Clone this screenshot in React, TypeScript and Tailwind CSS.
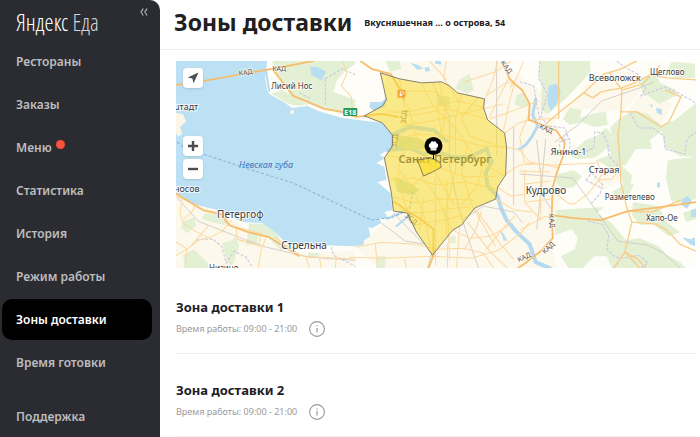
import { useState } from 'react';
import { clsx } from 'clsx';

interface MenuItem {
  id: string;
  label: string;
  hasBadge?: boolean;
}

interface Zone {
  id: number;
  name: string;
  hours: string;
}

const menuItems: MenuItem[] = [
  { id: 'restaurants', label: 'Рестораны' },
  { id: 'orders', label: 'Заказы' },
  { id: 'menu', label: 'Меню', hasBadge: true },
  { id: 'stats', label: 'Статистика' },
  { id: 'history', label: 'История' },
  { id: 'schedule', label: 'Режим работы' },
  { id: 'zones', label: 'Зоны доставки' },
  { id: 'cooking', label: 'Время готовки' },
];

const zones: Zone[] = [
  { id: 1, name: 'Зона доставки 1', hours: '09:00 - 21:00' },
  { id: 2, name: 'Зона доставки 2', hours: '09:00 - 21:00' },
];

const forests = [
  'M273 61L356 61L356 64L345 72L338 80L334 92L356 100L356 117L336 112L310 104L294 96L283 84L276 72Z',
  'M283 90L292 95L308 104L300 106L289 104L281 99L272 94Z',
  'M176 165L190 170L192 182L181 178L176 175Z',
  'M184 221L196 217L197 226L188 233L182 228Z',
  'M206 213L219 214L230 220L226 225L212 222L203 219Z',
  'M184 254L195 249L208 262L210 268L186 268Z',
  'M231 241L237 236L240 246L236 258L232 268L227 258L223 243Z',
  'M250 223L263 224L258 242L247 246Z',
  'M263 223L275 230L283 242L292 247L282 250L268 237L256 234Z',
  'M309 252L321 253L319 257L308 257Z',
  'M460 80L470 74L474 90L468 94L456 89Z',
  'M517 95L523 93L530 105L522 108L515 104Z',
  'M540 61L590 61L591 72L580 84L569 96L560 104L548 114L541 110L542 86L539 74Z',
  'M386 61L400 61L402 69L391 72Z',
  'M570 108L582 110L580 118L596 113L606 112L608 125L594 127L582 122L570 125L563 119Z',
  'M620 118L632 111L648 114L662 126L675 120L696 103L696 157L680 156L665 147L662 131L650 140L652 149L636 149L626 165L610 168L597 160L612 154L604 147L614 138L610 128Z',
  'M606 128L614 136L603 152L594 158L579 159L571 157L577 148L586 140L597 136Z',
  'M672 62L695 64L695 78L676 78L666 72Z',
  'M639 82L655 73L660 83L676 90L676 96L659 104L650 97L643 93Z',
  'M696 157L668 160L666 178L671 200L680 203L696 199L696 157Z',
  'M612 192L624 185L634 184L629 196L618 198Z',
  'M620 164L632 175L631 185L624 187L622 178L616 169Z',
  'M559 174L574 170L582 176L574 187L562 189L556 182Z',
  'M556 210L604 207L597 213L612 223L626 240L640 238L659 246L666 254L680 262L686 268L612 268L607 256L594 256L583 268L569 268L561 256L575 249L578 238L572 229L555 235Z',
  'M633 202L658 206L668 223L680 232L669 236L653 224L640 225L632 215Z',
  'M683 213L696 208L696 219L686 222Z',
  'M450 236L456 236L456 243L450 243Z',
  'M378 256L386 256L386 268L377 268Z',
];

const urban = [
  'M388 64L430 61L500 61L540 90L548 110L560 130L560 200L552 220L556 268L380 268L358 250L394 212L384 160L393 135L366 116L384 106Z',
  'M592 76L608 72L630 72L652 82L640 92L625 110L600 112L583 108L574 118L562 113L576 100Z',
  'M627 112L643 92L673 103L661 126L648 116Z',
  'M176 195L219 212L262 236L292 254L356 250L356 268L176 268Z',
  'M596 174L612 168L622 179L604 190L590 185Z',
];

const lakes = [
  'M311 67L318 67L327 72L322 81L312 75Z',
  'M411 63L418 65L424 69L418 70ZM435 61L441 61L442 65L436 64Z',
  'M425 68L429 67L431 71L426 72Z',
  'M371 102L382 102L388 97L386 106L374 111L370 107Z',
  'M549 86L557 84L561 92L557 104L551 111L548 103Z',
  'M656 108L662 109L662 115L657 113ZM650 104L653 105L652 108Z',
  'M682 199L688 196L692 201L687 209L682 205ZM691 210L696 209L696 217L691 217Z',
  'M682 237L691 239L695 237L695 246L690 244Z',
  'M657 183L660 182L660 188L657 187Z',
  'M500 229L505 235L508 241L504 240Z',
];

const bay =
  'M170 61L268 61L266 78L268 91L271 95L283 101L293 108L308 106L319 111L343 118L367 121L383 123L393 135L392 148L380 155L386 158L377 163L385 167L387 180L378 182L391 193L393 210L385 212L390 220L380 218L382 223L373 228L369 227L371 236L365 240L364 245L353 246L326 245L304 246L286 242L276 232L263 223L243 222L219 210L193 204L184 197L170 192Z';

const zoneOutline =
  'M381 73L400 79L422 83L442 82L450 86L458 93L485 99L484 108L488 120L505 133L507 148L506 175L498 187L496 199L475 208L462 225L453 230L433 255L417 232L408 213L394 211L392 193L385 158L393 146L393 135L383 123L365 116L383 106L387 100L384 86Z';

const innerZoneOutline = 'M418 160L432 158L440 162L442 167L433 172L424 176Z';

const minorRoads = [
  // north coast and suburbs
  'M343 61L348 73L342 86L352 97L353 111',
  'M176 196L183 199L181 213L184 223L198 232L210 238L223 231L233 220',
  'M198 203L192 213L184 219',
  'M176 241L188 249L200 240L210 237M188 249L186 268M188 249L176 256M191 247L209 226',
  'M237 227L262 233L260 245L238 239Z',
  'M267 237L262 250L259 268M262 246L240 240M276 237L287 246L303 256L356 259',
  'M307 257L310 268M320 257L322 268M337 256L336 268',
  // city grid
  'M392 75L410 110L418 142L434 170L455 205M400 79L405 108L408 130',
  'M404 92L420 91L437 92L439 115L443 140',
  'M388 112L407 112L440 105L460 101L484 108',
  'M393 118L420 114L448 109L487 119M403 126L436 120L466 113L504 104',
  'M422 84L433 105L458 131L478 160L505 176',
  'M462 95L456 118L456 170L446 210L447 234',
  'M478 98L462 118L470 136L505 148M440 82L446 112L440 148',
  'M394 140L418 134L447 136L482 146L506 147',
  'M388 156L413 158L432 165L465 177L498 176',
  'M391 180L414 178L436 185L466 182L497 189',
  'M393 197L418 203L439 199L475 200',
  'M408 213L430 212L447 209L470 207M415 225L445 220L463 215',
  'M400 170L414 190L424 213L432 252M450 150L428 173L407 190',
  'M423 178L438 198L452 229M410 145L400 160L399 183L408 210',
  'M468 145L462 172L473 207L496 246',
  'M436 177L436 265M447 179L450 260M424 199L420 230M485 160L478 185L462 205',
  // south
  'M356 247L382 242L416 244L438 249L463 248L484 253L494 268',
  'M350 257L385 258L432 256L472 258L499 250L522 232L530 222',
  'M453 230L470 238L491 236L510 225M468 222L480 238L491 252L508 268',
  'M475 208L489 227L500 243L514 259M498 187L511 196L530 194M496 199L515 210L532 212',
  'M405 259L407 268M376 243L378 268M448 243L448 268M460 226L457 268',
  'M482 211L476 230L465 249M515 216L502 230L486 250',
  // east
  'M505 133L519 123L530 120L560 118M506 147L520 150L530 162L560 168M506 174L520 165L535 164',
  'M430 61L447 80M447 61L444 78L460 103M465 82L496 72L512 61M486 96L508 82L523 89',
  'M498 61L494 78L486 98M509 79L502 92L490 117M524 61L517 78L510 89',
  'M490 119L516 110L539 101M515 83L510 101L504 130M530 112L520 137L525 163',
  'M525 170L525 202L541 220M541 168L541 220M520 230L544 217L553 216M527 202L552 199',
  'M526 163L554 165L596 163M525 184L551 181M520 171L550 172',
  'M555 192L568 203L574 204L588 194L599 180M597 160L602 174L599 180L612 179L618 172L617 160',
];

const mainRoads = [
  'M546 124L561 111L584 93L604 74L619 70L637 61',
  'M584 93L593 98L601 92L622 88L635 83L650 75L667 78L696 80',
  'M609 72L622 90L621 114L618 136L620 160L621 182L627 208L632 222L625 252L640 268',
  'M620 112L637 112L661 127L669 122L681 97L665 90M623 90L643 84L660 66',
  'M632 222L656 224L667 230L680 244L696 251M628 211L652 212L681 200',
  'M625 252L614 268M625 252L638 259L646 268M559 118L559 61',
];

const highways = [
  'M170 86L205 81L273 69L315 61',
  'M273 69L294 96L325 109L343 112L356 117L366 116',
  'M361 61L372 69L391 74L400 88L405 101',
  'M366 116L382 114L399 117',
  'M502 61L510 79L523 91L530 104L529 120L543 125L557 131L565 143L563 157L558 170L553 187L552 215L553 238L541 251L524 264L518 268',
  'M552 215L574 218L601 220L628 211L653 208L696 202',
  'M176 193L192 203L204 210L222 214L230 225L249 232L270 237L286 247L300 256',
  'M394 201L408 211L421 219L434 229L434 255L429 268',
];

const rails = [
  'M176 195L199 221L242 238L267 247L310 257L356 260',
  'M433 83L450 117L450 165L459 208L472 248L479 268',
  'M434 246L428 268M462 220L484 206L514 212L523 223',
  'M497 155L497 61M514 127L514 205M394 213L424 244M382 223L406 241L426 244',
  'M555 142L577 126L602 101L640 88L654 82',
  'M520 174L573 178L594 207L618 241L648 245L664 253L680 268',
  'M537 140L542 185L537 229M546 139L541 193L553 211',
];

const borders = [
  'M540 61L539 79L548 94L541 116L548 126L565 128L569 139L562 140L567 134',
  'M520 82L534 86L537 104L540 119',
  'M617 61L624 67L639 75L640 83L646 88L641 96L652 92L665 87L680 94L696 103',
  'M630 113L639 128L653 128L664 136L665 149L685 154L687 139L696 132',
  'M618 166L609 156L608 144L603 133L595 132L594 148L578 155L570 151L570 139L560 142L560 157',
  'M586 180L592 173L603 185L600 194L591 204M586 180L602 188',
  'M588 221L602 224L609 235L607 249L615 257L624 258L639 255L648 263L640 268',
  'M197 240L202 239L214 239L223 247L227 263L235 251L247 257L253 267',
  'M326 79L343 69L356 75M326 79L326 106M300 93L310 98L308 105',
  'M332 247L334 255L356 266',
];

const mapButton = 'flex size-5 items-center justify-center rounded-sm bg-white text-[#4d4d4d] shadow';

function PlaceLabel({ x, y, size, children }: { x: number; y: number; size: number; children: string }) {
  return (
    <text
      x={x}
      y={y}
      fontSize={size}
      fill="#3b3b3b"
      stroke="#fff"
      strokeOpacity="0.8"
      strokeWidth="2"
      strokeLinejoin="round"
      paintOrder="stroke">
      {children}
    </text>
  );
}

function RoadLabel({ x, y, angle }: { x: number; y: number; angle: number }) {
  return (
    <text
      transform={`translate(${x} ${y}) rotate(${angle})`}
      fontSize="7"
      fill="#5a5148"
      stroke="#fff"
      strokeOpacity="0.7"
      strokeWidth="1.5"
      paintOrder="stroke">
      КАД
    </text>
  );
}

function CityMap() {
  return (
    <svg
      viewBox="177 61 519 207"
      preserveAspectRatio="xMidYMid slice"
      className="block h-[207px] w-full"
      role="img"
      aria-label="Санкт-Петербург">
      <rect x="170" y="55" width="540" height="220" fill="#fefdf7" />
      <g fill="#fdf8ec">
        {urban.map((d) => <path key={d} d={d} />)}
      </g>
      <g fill="#e3f0d4">
        {forests.map((d) => <path key={d} d={d} />)}
      </g>
      <path d={bay} fill="#bce0f4" />
      <path d="M170 112L184 114L187 122L181 127L183 134L179 137L176 131L170 128Z" fill="#fcf6e8" />
      <circle cx="293" cy="112" r="2" fill="#fcf6e8" />
      <g fill="#b9def2">
        {lakes.map((d) => <path key={d} d={d} />)}
      </g>

      {/* Neva and its branches */}
      <g fill="none" stroke="#b5daf0" strokeLinecap="round" strokeLinejoin="round">
        <path d="M393 135L411 127L434 130L447 141M388 150L410 148L424 154L437 151L452 157L470 157L487 149L492 162L486 173L488 186L498 196L501 207L507 220L517 232L530 244L536 262L550 268" strokeWidth="4" />
        <path d="M536 99L533 115L538 126L532 137L526 145L520 149" strokeWidth="3" />
        <path d="M397 226L413 213M389 218L404 211M267 72L270 91" strokeWidth="2" />
      </g>
      <path d="M395 177L411 183L420 190L413 195L398 192Z" fill="#cfe3bd" />
      <path d="M396 135L418 138L436 147L417 150L397 147Z" fill="#cfe3bd" />
      <path d="M438 95L450 97L450 108L438 106Z" fill="#dbe9c8" />

      <path
        d="M170 136L186 148L240 166L294 183L345 207L372 220L394 217L410 209L414 190"
        fill="none"
        stroke="#8bb1dc"
        strokeDasharray="3 2"
      />
      <g fill="none" stroke="#c9c6c2" strokeWidth="0.8">
        {rails.map((d) => <path key={d} d={d} />)}
      </g>
      <g fill="none" stroke="#c9c3e6" strokeDasharray="3 1.5">
        {borders.map((d) => <path key={d} d={d} />)}
      </g>
      <g fill="none" stroke="#fbd9a2" strokeWidth="1" strokeLinejoin="round">
        {minorRoads.map((d) => <path key={d} d={d} />)}
      </g>
      <g fill="none" stroke="#f9cc85" strokeWidth="1.3" strokeLinejoin="round">
        {mainRoads.map((d) => <path key={d} d={d} />)}
      </g>
      <g fill="none" stroke="#f7bd6c" strokeWidth="1.8" strokeLinejoin="round">
        {highways.map((d) => <path key={d} d={d} />)}
      </g>

      <g fontFamily="'Noto Sans', sans-serif">
        <RoadLabel x={240} y={76} angle={-9} />
        <RoadLabel x={273} y={71} angle={0} />
        <RoadLabel x={501} y={63} angle={54} />
        <RoadLabel x={539} y={128} angle={24} />
        <RoadLabel x={549} y={214} angle={84} />
        <RoadLabel x={545} y={254} angle={-42} />
        <RoadLabel x={519} y={262} angle={-24} />
        <g fontSize="7" fill="#6b6250">
          <text transform="translate(406 124) rotate(-84)">ЗСД</text>
          <text transform="translate(397 148) rotate(-84)">ЗСД</text>
          <text transform="translate(405 216) rotate(42)">ЗСД</text>
        </g>
        <PlaceLabel x={272} y={89} size={8}>Лисий Нос</PlaceLabel>
        <PlaceLabel x={167} y={110} size={9}>нштадт</PlaceLabel>
        <PlaceLabel x={175} y={192} size={9}>носов</PlaceLabel>
        <PlaceLabel x={218} y={218} size={10}>Петергоф</PlaceLabel>
        <PlaceLabel x={282} y={249} size={10}>Стрельна</PlaceLabel>
        <PlaceLabel x={210} y={271} size={8}>Низино</PlaceLabel>
        <PlaceLabel x={589} y={81} size={9}>Всеволожск</PlaceLabel>
        <PlaceLabel x={650} y={75} size={8}>Щеглово</PlaceLabel>
        <PlaceLabel x={551} y={155} size={9}>Янино-1</PlaceLabel>
        <PlaceLabel x={589} y={173} size={9}>Старая</PlaceLabel>
        <PlaceLabel x={526} y={194} size={10}>Кудрово</PlaceLabel>
        <PlaceLabel x={605} y={200} size={8}>Разметелево</PlaceLabel>
        <PlaceLabel x={646} y={221} size={8}>Хапо-Ое</PlaceLabel>
        <text x="240" y="168" fontSize="9" fontStyle="italic" fill="#4478bd">Невская губа</text>
        <text x="399" y="163" fontSize="11" fontWeight="600" fill="#3b3b3b">Санкт-Петербург</text>
        <rect x="344" y="108" width="14" height="8" rx="1" fill="#269a59" />
        <text x="351" y="115" fontSize="7" fontWeight="700" fill="#fff" textAnchor="middle">E18</text>
      </g>

      <path d={zoneOutline} fill="#f8dc33" fillOpacity="0.54" stroke="#6b675a" strokeWidth="0.8" />
      <path d={innerZoneOutline} fill="#fbdc16" fillOpacity="0.55" stroke="#6b675a" strokeWidth="0.8" />
      <rect x="398" y="90" width="8" height="8" rx="1" fill="#f6a33c" />
      <path d="M401 96.500V91.800H403A1.200 1.200 0 0 1 403 94.300H400M400 95.500H403" fill="none" stroke="#fff" strokeWidth="0.7" />

      {/* restaurant pin */}
      <circle cx="434" cy="146" r="9" fill="#000" />
      <path d="M431 148C428.800 147.400 428.800 143.600 431 143.300C431.400 141.200 433.200 140.800 434 141.800C434.800 140.800 436.600 141.200 437 143.300C439.200 143.600 439.200 147.400 437 148V150.500H431Z" fill="#fff" />
      <path d="M431 148.800H437" stroke="#777" strokeWidth="0.4" />
      <path d="M434 155V159" stroke="#000" strokeWidth="1" />
    </svg>
  );
}

function InfoIcon() {
  return (
    <svg viewBox="0 0 16 16" className="size-4" fill="none" stroke="#999" aria-hidden="true">
      <circle cx="8" cy="8" r="7.400" strokeWidth="1.100" />
      <path d="M8 7V11.500" strokeWidth="1.200" />
      <circle cx="8" cy="4.900" r="0.700" fill="#999" stroke="none" />
    </svg>
  );
}

export default function App() {
  const [activeItem, setActiveItem] = useState('zones');

  const linkClass = (id: string) =>
    clsx(
      'flex h-[41px] items-center rounded-[10px] px-3.5 text-xs font-semibold',
      activeItem === id ? 'bg-black text-white' : 'text-[#bdbdbf]'
    );

  return (
    <div className="flex min-h-screen bg-white font-['Noto_Sans',sans-serif] text-[#21201f]">
      <aside className="flex w-40 shrink-0 flex-col rounded-tr-[10px] bg-[#2b2c31] pr-2 pl-0.5">
        <div className="flex h-[41px] items-start justify-between pr-1 pl-3.5">
          <a href="#" className="pt-2 font-['Open_Sans_Condensed_Light','Open_Sans_Condensed','Liberation_Sans_Narrow',sans-serif] text-[23px] leading-7 font-light whitespace-nowrap text-white">
            Яндекс <span className="text-gray-300">Еда</span>
          </a>
          <button type="button" aria-label="Свернуть меню" className="pt-2 text-[#bdbdbf]">
            <svg viewBox="0 0 8 8" className="size-2" fill="none" stroke="currentColor" strokeWidth="1.100">
              <path d="M3.200 0.500C2.500 2 1.800 3 0.900 4C1.800 5 2.500 6 3.200 7.500M7 0.500C6.300 2 5.600 3 4.700 4C5.600 5 6.300 6 7 7.500" />
            </svg>
          </button>
        </div>
        <nav className="flex flex-1 flex-col gap-0.5">
          {menuItems.map((item) => (
            <a key={item.id} href={`#${item.id}`} onClick={() => setActiveItem(item.id)} className={linkClass(item.id)}>
              {item.label}
              {item.hasBadge && <span className="mb-1.5 ml-1 size-[9px] rounded-full bg-[#f8513c]"></span>}
            </a>
          ))}
          <a href="#support" onClick={() => setActiveItem('support')} className={clsx(linkClass('support'), 'mt-auto')}>
            Поддержка
          </a>
        </nav>
      </aside>

      <main className="min-w-0 flex-1">
        <header className="flex h-[50px] items-center gap-3 border-b border-[#ececec] px-3.5 pb-1">
          <h1 className="text-[23px] font-bold whitespace-nowrap">Зоны доставки</h1>
          <span className="text-[9px] font-bold whitespace-nowrap">Вкусняшечная ... о острова, 54</span>
        </header>

        <div className="pt-[11px] pr-1 pl-4">
          <div className="relative">
            <CityMap />
            <div className="absolute top-[7px] left-[7px]">
              <button type="button" aria-label="Моё местоположение" className={mapButton}>
                <svg viewBox="0 0 12 12" className="size-3" fill="currentColor">
                  <path d="M11.500 0.500L0.800 5.500L5.400 6.500L6.500 11.200Z" />
                </svg>
              </button>
            </div>
            <div className="absolute top-[75px] left-[7px] flex flex-col gap-[3px]">
              <button type="button" aria-label="Приблизить" className={mapButton}>
                <svg viewBox="0 0 10 10" className="size-2.5" fill="currentColor">
                  <path d="M3.800 0H6.200V3.800H10V6.200H6.200V10H3.800V6.200H0V3.800H3.800Z" />
                </svg>
              </button>
              <button type="button" aria-label="Отдалить" className={mapButton}>
                <svg viewBox="0 0 10 10" className="size-2.5" fill="currentColor">
                  <path d="M0 3.800H10V6.200H0Z" />
                </svg>
              </button>
            </div>
          </div>

          <div className="pt-[3px]">
            {zones.map((zone) => (
              <section key={zone.id} className="border-b border-[#f0f0f0] pt-[26px] pb-4">
                <h2 className="text-[13px] leading-5 font-bold">{zone.name}</h2>
                <div className="mt-1 flex items-center gap-3 text-[9px] leading-4 text-[#999]">
                  <span>Время работы: {zone.hours}</span>
                  <button type="button" aria-label="Подробнее">
                    <InfoIcon />
                  </button>
                </div>
              </section>
            ))}
          </div>
        </div>
      </main>
    </div>
  );
}
